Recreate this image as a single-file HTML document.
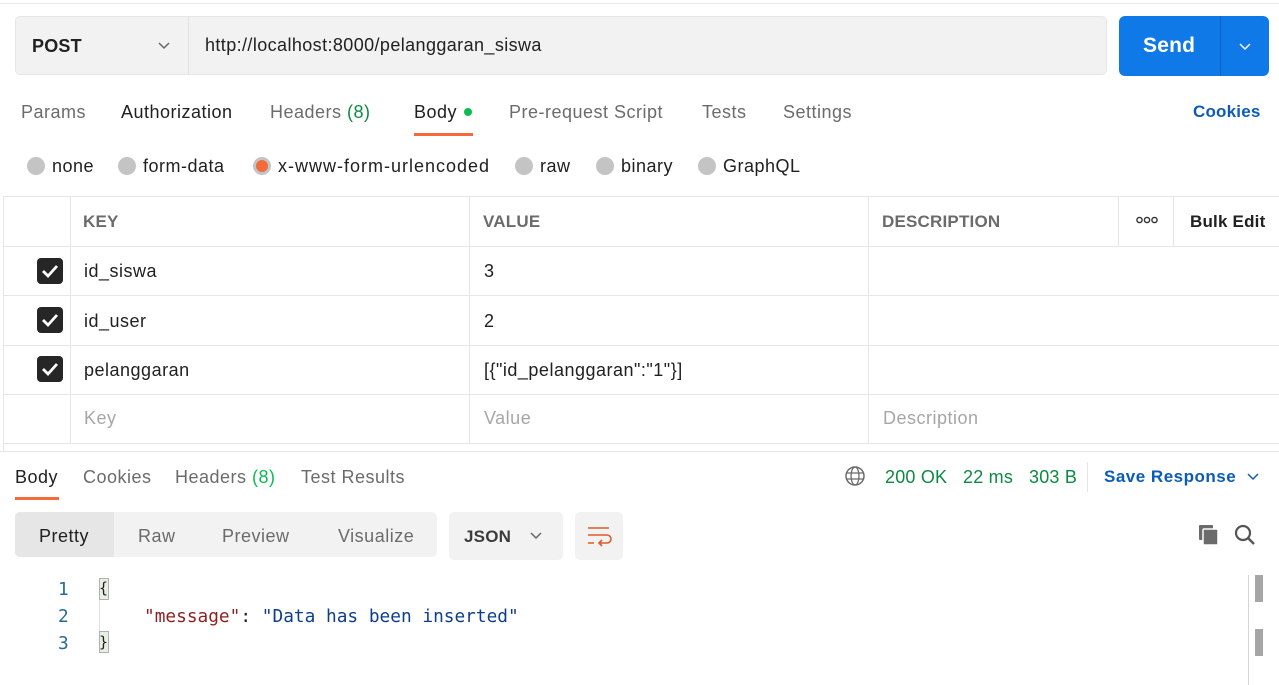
<!DOCTYPE html>
<html><head><style>
*{margin:0;padding:0;box-sizing:border-box}
body{width:1279px;height:685px;background:#fff;font-family:"Liberation Sans",sans-serif;color:#212121;position:relative;overflow:hidden;font-size:18px;letter-spacing:0.5px}
.a{position:absolute;white-space:nowrap}
.b{font-size:17px;letter-spacing:0.2px;font-weight:bold}
.g{color:#6b6b6b}
.hl{position:absolute;height:1px;background:#e6e6e6}
.vl{position:absolute;width:1px;background:#e6e6e6}
.rad{position:absolute;width:18px;height:18px;border-radius:50%;background:#c4c4c4;top:157px}
.cb{position:absolute;left:37px;width:26px;height:26px;background:#262626;border-radius:4px}
.cb svg{position:absolute;left:4px;top:5px}
.mono{font-family:"DejaVu Sans Mono","Liberation Mono",monospace;font-size:17.8px;letter-spacing:0}
</style></head><body>
<div class="hl" style="left:0;top:3px;width:1279px;background:#ececec"></div>
<div class="a" style="left:15px;top:16px;width:1092px;height:59px;background:#f2f2f2;border:1px solid #e6e6e6;border-radius:5px"></div>
<div class="vl" style="left:188px;top:17px;height:57px;background:#e2e2e2"></div>
<div class="a b" style="left:32px;top:36px;font-size:18px">POST</div>
<svg class="a" style="left:157px;top:41px" width="14" height="10"><path d="M2 2l5 5 5-5" stroke="#666" stroke-width="1.5" fill="none"/></svg>
<div class="a" style="left:205px;top:35px;font-size:18px;letter-spacing:0.4px">http://localhost:8000/pelanggaran_siswa</div>
<div class="a" style="left:1119px;top:16px;width:150px;height:60px;background:#0f79e8;border-radius:6px"></div>
<div class="vl" style="left:1220px;top:16px;height:60px;background:#0b64c4"></div>
<div class="a b" style="left:1143px;top:34px;color:#fff;font-size:21px">Send</div>
<svg class="a" style="left:1238px;top:42px" width="14" height="10"><path d="M2 2l5 5 5-5" stroke="#fff" stroke-width="1.5" fill="none"/></svg>
<div class="a g" style="left:21px;top:102px">Params</div>
<div class="a" style="left:121px;top:102px">Authorization</div>
<div class="a g" style="left:270px;top:102px">Headers <span style="color:#0c8a43">(8)</span></div>
<div class="a" style="left:414px;top:102px">Body</div>
<div class="a" style="left:464px;top:108px;width:8px;height:8px;border-radius:50%;background:#0cbb52"></div>
<div class="a" style="left:414px;top:133px;width:59px;height:3px;background:#f26b3a"></div>
<div class="a g" style="left:509px;top:102px">Pre-request Script</div>
<div class="a g" style="left:702px;top:102px">Tests</div>
<div class="a g" style="left:783px;top:102px">Settings</div>
<div class="a b" style="left:1193px;top:102px;color:#0b5cb5">Cookies</div>
<div class="rad" style="left:27px"></div><div class="a" style="left:52px;top:156px">none</div>
<div class="rad" style="left:118px"></div><div class="a" style="left:143px;top:156px">form-data</div>
<div class="rad" style="left:253px;background:#f26b3a;border:3px solid #c4c4c4"></div><div class="a" style="left:278px;top:156px;letter-spacing:1px">x-www-form-urlencoded</div>
<div class="rad" style="left:515px"></div><div class="a" style="left:540px;top:156px">raw</div>
<div class="rad" style="left:596px"></div><div class="a" style="left:621px;top:156px">binary</div>
<div class="rad" style="left:698px"></div><div class="a" style="left:723px;top:156px">GraphQL</div>
<div class="hl" style="left:3px;top:196px;width:1276px"></div>
<div class="hl" style="left:3px;top:246px;width:1276px"></div>
<div class="hl" style="left:3px;top:295px;width:1276px"></div>
<div class="hl" style="left:3px;top:345px;width:1276px"></div>
<div class="hl" style="left:3px;top:394px;width:1276px"></div>
<div class="hl" style="left:3px;top:443px;width:1276px"></div>
<div class="hl" style="left:0;top:451px;width:1279px"></div>
<div class="vl" style="left:3px;top:196px;height:256px"></div>
<div class="vl" style="left:70px;top:196px;height:248px"></div>
<div class="vl" style="left:469px;top:196px;height:248px"></div>
<div class="vl" style="left:868px;top:196px;height:248px"></div>
<div class="vl" style="left:1118px;top:196px;height:50px"></div>
<div class="vl" style="left:1173px;top:196px;height:50px"></div>
<div class="a b" style="left:83px;top:212px;color:#6b6b6b">KEY</div>
<div class="a b" style="left:483px;top:212px;color:#6b6b6b">VALUE</div>
<div class="a b" style="left:882px;top:212px;color:#6b6b6b">DESCRIPTION</div>
<svg class="a" style="left:1136px;top:216px" width="22" height="8"><circle cx="3.5" cy="4" r="2.6" stroke="#333" stroke-width="1.4" fill="none"/><circle cx="11" cy="4" r="2.6" stroke="#333" stroke-width="1.4" fill="none"/><circle cx="18.5" cy="4" r="2.6" stroke="#333" stroke-width="1.4" fill="none"/></svg>
<div class="a b" style="left:1190px;top:212px">Bulk Edit</div>
<div class="cb" style="top:258px"><svg width="18" height="16"><path d="M2 8l5 5 9-10" stroke="#fff" stroke-width="2.8" fill="none"/></svg></div>
<div class="cb" style="top:307px"><svg width="18" height="16"><path d="M2 8l5 5 9-10" stroke="#fff" stroke-width="2.8" fill="none"/></svg></div>
<div class="cb" style="top:356px"><svg width="18" height="16"><path d="M2 8l5 5 9-10" stroke="#fff" stroke-width="2.8" fill="none"/></svg></div>
<div class="a" style="left:84px;top:261px">id_siswa</div><div class="a" style="left:484px;top:261px">3</div>
<div class="a" style="left:84px;top:311px">id_user</div><div class="a" style="left:484px;top:311px">2</div>
<div class="a" style="left:84px;top:360px">pelanggaran</div><div class="a" style="left:484px;top:360px">[{"id_pelanggaran":"1"}]</div>
<div class="a" style="left:84px;top:408px;color:#a6a6a6">Key</div>
<div class="a" style="left:484px;top:408px;color:#a6a6a6">Value</div>
<div class="a" style="left:883px;top:408px;color:#a6a6a6">Description</div>
<div class="a" style="left:15px;top:467px">Body</div>
<div class="a" style="left:15px;top:497px;width:44px;height:3px;background:#f26b3a"></div>
<div class="a g" style="left:83px;top:467px">Cookies</div>
<div class="a g" style="left:175px;top:467px">Headers <span style="color:#0cbb52">(8)</span></div>
<div class="a g" style="left:301px;top:467px">Test Results</div>
<svg class="a" style="left:844px;top:465px" width="22" height="22"><circle cx="11" cy="11" r="9" stroke="#6b6b6b" stroke-width="1.5" fill="none"/><ellipse cx="11" cy="11" rx="4" ry="9" stroke="#6b6b6b" stroke-width="1.3" fill="none"/><path d="M2 8h18M2 14h18" stroke="#6b6b6b" stroke-width="1.3"/></svg>
<div class="a" style="left:885px;top:467px;color:#0c8a43;letter-spacing:0.2px">200 OK</div>
<div class="a" style="left:963px;top:467px;color:#0c8a43;letter-spacing:0.2px">22 ms</div>
<div class="a" style="left:1029px;top:467px;color:#0c8a43;letter-spacing:0.2px">303 B</div>
<div class="vl" style="left:1087px;top:462px;height:30px"></div>
<div class="a b" style="left:1104px;top:467px;color:#0b5cb5;letter-spacing:0.5px">Save Response</div>
<svg class="a" style="left:1246px;top:472px" width="14" height="10"><path d="M2 2l5 5 5-5" stroke="#0b5cb5" stroke-width="1.5" fill="none"/></svg>
<div class="a" style="left:15px;top:512px;width:422px;height:45px;background:#f2f2f2;border-radius:5px"></div>
<div class="a" style="left:15px;top:512px;width:99px;height:45px;background:#e6e6e6;border-radius:5px 0 0 5px"></div>
<div class="a" style="left:39px;top:526px">Pretty</div>
<div class="a g" style="left:138px;top:526px">Raw</div>
<div class="a g" style="left:222px;top:526px">Preview</div>
<div class="a g" style="left:338px;top:526px">Visualize</div>
<div class="a" style="left:449px;top:512px;width:114px;height:48px;background:#f2f2f2;border-radius:5px"></div>
<div class="a b" style="left:464px;top:527px;color:#3c3c3c">JSON</div>
<svg class="a" style="left:529px;top:531px" width="14" height="10"><path d="M2 2l5 5 5-5" stroke="#666" stroke-width="1.5" fill="none"/></svg>
<div class="a" style="left:575px;top:512px;width:48px;height:48px;background:#f2f2f2;border-radius:5px"></div>
<svg class="a" style="left:586px;top:524px" width="26" height="24"><path d="M2 4h21M2 11h19a4 4 0 0 1 0 8h-8M2 19h6M16 16l-3 3 3 3" stroke="#e05a26" stroke-width="1.6" fill="none"/></svg>
<svg class="a" style="left:1197px;top:523px" width="24" height="24"><rect x="2" y="2" width="14" height="15" rx="1" fill="#6b6b6b"/><rect x="6" y="6" width="15" height="16" rx="1" fill="#6b6b6b" stroke="#fff" stroke-width="1.5"/></svg>
<svg class="a" style="left:1233px;top:523px" width="24" height="24"><circle cx="10" cy="10" r="7" stroke="#555" stroke-width="2.2" fill="none"/><path d="M15 15l6 6" stroke="#555" stroke-width="2.4"/></svg>
<div class="a mono" style="left:58px;top:579px;color:#2a6b93">1</div>
<div class="a mono" style="left:58px;top:606px;color:#2a6b93">2</div>
<div class="a mono" style="left:58px;top:633px;color:#2a6b93">3</div>
<div class="a" style="left:99px;top:578px;width:10px;height:22px;background:#e8efe3;border:1px solid #b0b0b0"></div>
<div class="a" style="left:99px;top:631px;width:10px;height:22px;background:#e8efe3;border:1px solid #b0b0b0"></div>
<div class="vl" style="left:99px;top:600px;height:31px;background:#e0e0e0"></div>
<div class="a mono" style="left:99px;top:579px;font-size:15px">{</div>
<div class="a mono" style="left:99px;top:633px;font-size:15px">}</div>
<div class="a mono" style="left:144px;top:606px"><span style="color:#8b1f1f">"message"</span>: <span style="color:#0e3e8a">"Data has been inserted"</span></div>
<div class="vl" style="left:1248px;top:575px;height:110px;background:#d6d6d6"></div>
<div class="a" style="left:1255px;top:575px;width:8px;height:27px;background:#a6a6a6"></div>
<div class="a" style="left:1255px;top:629px;width:8px;height:27px;background:#a6a6a6"></div>
</body></html>
